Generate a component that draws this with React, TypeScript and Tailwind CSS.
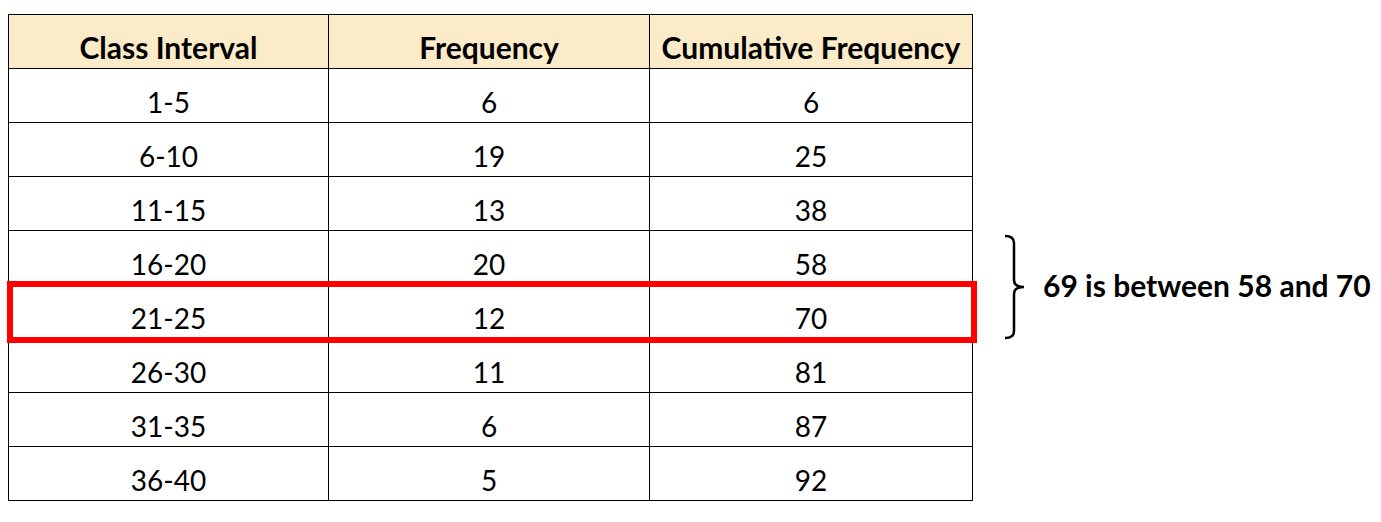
const rows = [
  ['1-5', '6', '6'],
  ['6-10', '19', '25'],
  ['11-15', '13', '38'],
  ['16-20', '20', '58'],
  ['21-25', '12', '70'],
  ['26-30', '11', '81'],
  ['31-35', '6', '87'],
  ['36-40', '5', '92'],
];

const headers = ['Class Interval', 'Frequency', 'Cumulative Frequency'];

export default function App() {
  return (
    <div className="w-[1381px] h-[522px] bg-white flex pl-[8px] pt-[14px] font-['Lato',sans-serif] text-black">
      <div className="relative">
        <div className="grid grid-cols-[320px_321px_323px] border-l border-t border-black">
          {headers.map((h) => (
            <div
              key={h}
              className="h-[54px] bg-[#fcebc8] border-r border-b border-black flex items-end justify-center pb-[6px] text-[30px] font-bold leading-none"
            >
              {h}
            </div>
          ))}
          {rows.map((r) =>
            r.map((c, i) => (
              <div
                key={r[0] + i}
                className="h-[54px] border-r border-b border-black flex items-end justify-center pb-[6px] text-[28px] leading-none"
              >
                {c}
              </div>
            ))
          )}
        </div>
        {/* highlight around 21-25 row */}
        <div className="absolute left-[-1px] top-[267px] w-[970px] h-[62px] border-[6px] border-[#ff0000]" />
      </div>

      <div className="ml-[31px] pt-[220px] flex items-start">
        <svg width="26" height="106" viewBox="0 0 26 106" fill="none" stroke="black" strokeWidth="2.5">
          <path d="M1 2 Q10 2 10 9 V46 Q10 53 20 53 Q10 53 10 60 V97 Q10 104 1 104" />
        </svg>
        <div className="ml-[13px] mt-[36px] text-[30px] font-bold leading-none whitespace-nowrap">
          69 is between 58 and 70
        </div>
      </div>
    </div>
  );
}
